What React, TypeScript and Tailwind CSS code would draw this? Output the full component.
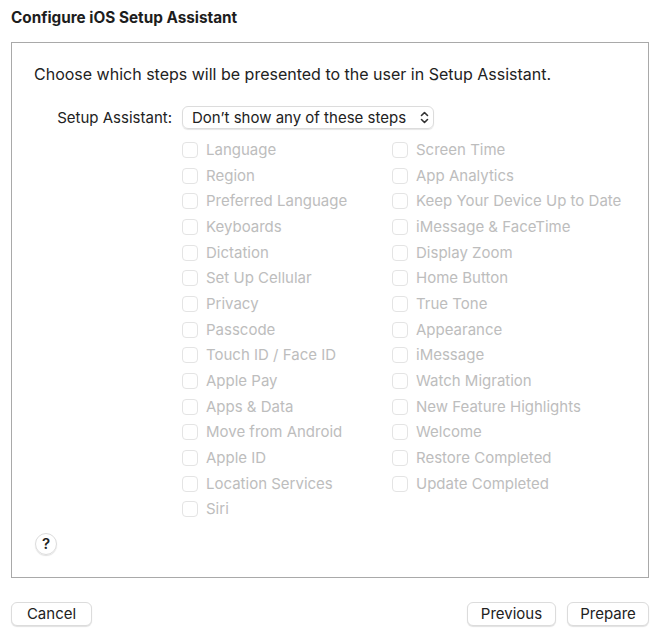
import React from 'react'

const left = ['Language', 'Region', 'Preferred Language', 'Keyboards', 'Dictation', 'Set Up Cellular', 'Privacy', 'Passcode', 'Touch ID / Face ID', 'Apple Pay', 'Apps & Data', 'Move from Android', 'Apple ID', 'Location Services', 'Siri']
const right = ['Screen Time', 'App Analytics', 'Keep Your Device Up to Date', 'iMessage & FaceTime', 'Display Zoom', 'Home Button', 'True Tone', 'Appearance', 'iMessage', 'Watch Migration', 'New Feature Highlights', 'Welcome', 'Restore Completed', 'Update Completed']

function Step({ label }: { label: string }) {
  return (
    <div className="flex items-center h-[25.7px]">
      <span className="w-[16px] h-[16px] rounded-[4px] border border-[#e4e4e4] bg-white shrink-0" />
      <span className="ml-[8px] text-[15px] leading-[20px] text-[#bdbdbd] whitespace-nowrap">{label}</span>
    </div>
  )
}

function Btn({ children, w }: { children: React.ReactNode; w: string }) {
  return (
    <button className={`${w} h-[24px] rounded-[6px] bg-white text-[15px] leading-[20px] text-[#222] border border-[#dcdcdc] shadow-[0_1px_1px_rgba(0,0,0,0.12)]`}>
      {children}
    </button>
  )
}

export default function App() {
  return (
    <div className="w-[660px] h-[638px] bg-white text-[#222] flex flex-col" style={{ fontFamily: 'Inter, "Liberation Sans", sans-serif' }}>
      <div className="pl-[11px] pt-[8px] h-[42px] text-[15.3px] leading-[20px] font-bold text-[#1d1d1d]">Configure iOS Setup Assistant</div>

      <div className="mx-[11px] h-[536px] border border-[#a9a9a9] flex flex-col">
        <p className="pl-[22px] pt-[21px] text-[16px] leading-[20px] text-[#222]">Choose which steps will be presented to the user in Setup Assistant.</p>

        <div className="flex items-center mt-[22px] h-[23px]">
          <span className="w-[160px] text-right text-[15px] leading-[20px] text-[#222]">Setup Assistant:</span>
          <div className="ml-[10px] w-[252px] h-[23px] rounded-[6px] border border-[#dcdcdc] shadow-[0_1px_1px_rgba(0,0,0,0.1)] flex items-center pl-[9px] pr-[4px] justify-between">
            <span className="text-[15px] leading-[20px] text-[#222]">Don’t show any of these steps</span>
            <svg width="9" height="13" viewBox="0 0 9 13" fill="none" stroke="#333" strokeWidth="1.6" strokeLinecap="round" strokeLinejoin="round">
              <path d="M1.5 4.5 L4.5 1.5 L7.5 4.5" />
              <path d="M1.5 8.5 L4.5 11.5 L7.5 8.5" />
            </svg>
          </div>
        </div>

        <div className="flex mt-[8px] pl-[170px]">
          <div className="w-[210px]">
            {left.map(l => <Step key={l} label={l} />)}
          </div>
          <div>
            {right.map(l => <Step key={l} label={l} />)}
          </div>
        </div>

        <div className="pl-[23px] mt-[11px]">
          <div className="w-[22px] h-[22px] rounded-full border border-[#dcdcdc] shadow-[0_1px_1px_rgba(0,0,0,0.12)] flex items-center justify-center text-[15px] font-semibold text-[#222]">?</div>
        </div>
      </div>

      <div className="flex items-center px-[11px] mt-[24px]">
        <Btn w="w-[81px]">Cancel</Btn>
        <div className="flex-1" />
        <Btn w="w-[89px]">Previous</Btn>
        <div className="w-[11px]" />
        <Btn w="w-[82px]">Prepare</Btn>
      </div>
    </div>
  )
}
